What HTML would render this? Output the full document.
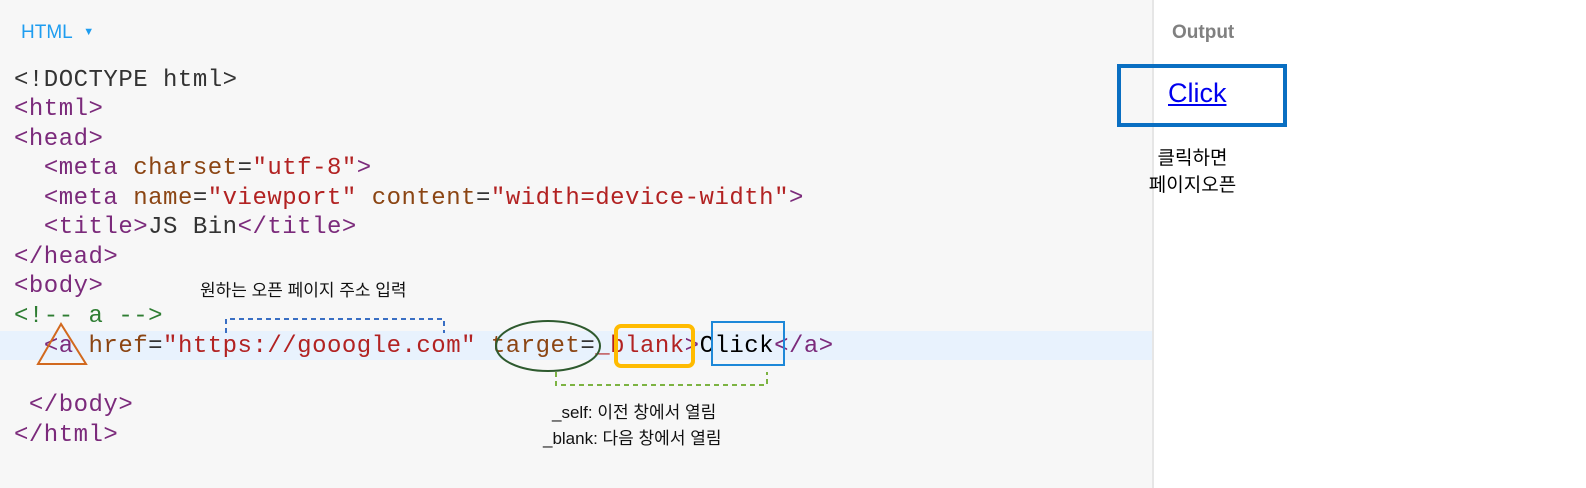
<!DOCTYPE html>
<html><head><meta charset="utf-8"><style>
body{margin:0;width:1586px;height:488px;position:relative;overflow:hidden;font-family:"Liberation Sans","Noto Sans CJK KR",sans-serif;background:#fff}
#ed{position:absolute;left:0;top:0;width:1152px;height:488px;background:#f7f7f7;border-right:2px solid #e6e6e6}
.hl{position:absolute;left:0;top:331px;width:1152px;height:29px;background:#e8f2fd}
.l{position:absolute;left:14px;font-family:"Liberation Mono",monospace;font-size:24px;letter-spacing:0.5px;white-space:pre;line-height:29px;color:#333}
.t{color:#7b2a7b}.a{color:#8b4513}.s{color:#b22222}.c{color:#2e7d32}
.k{position:absolute;font-size:17px;color:#111;white-space:nowrap}
</style></head><body>
<div id="ed"></div>
<div class="hl"></div>
<div style="position:absolute;left:21px;top:22px;font-size:19px;color:#1e9df0">HTML <span style="font-size:11px;vertical-align:3px;margin-left:6px">▼</span></div>
<div class="l" style="top:66px">&lt;!DOCTYPE html&gt;</div>
<div class="l t" style="top:95px">&lt;html&gt;</div>
<div class="l t" style="top:125px">&lt;head&gt;</div>
<div class="l" style="top:154px">  <span class="t">&lt;meta</span> <span class="a">charset</span>=<span class="s">"utf-8"</span><span class="t">&gt;</span></div>
<div class="l" style="top:184px">  <span class="t">&lt;meta</span> <span class="a">name</span>=<span class="s">"viewport"</span> <span class="a">content</span>=<span class="s">"width=device-width"</span><span class="t">&gt;</span></div>
<div class="l" style="top:213px">  <span class="t">&lt;title&gt;</span>JS Bin<span class="t">&lt;/title&gt;</span></div>
<div class="l t" style="top:243px">&lt;/head&gt;</div>
<div class="l t" style="top:272px">&lt;body&gt;</div>
<div class="l c" style="top:302px">&lt;!-- a --&gt;</div>
<div class="l" style="top:332px">  <span class="t">&lt;a</span> <span class="a">href</span>=<span class="s">"https://gooogle.com"</span> <span class="a">target</span>=<span class="s">_blank</span><span class="t">&gt;</span><span style="color:#000">Click</span><span class="t">&lt;/a&gt;</span></div>
<div class="l t" style="top:391px"> &lt;/body&gt;</div>
<div class="l t" style="top:421px">&lt;/html&gt;</div>
<svg style="position:absolute;left:0;top:0" width="1152" height="488">
<polygon points="61,324 38,364 86,364" fill="none" stroke="#d2691e" stroke-width="2"/>
<path d="M226,333 V319 H444 V333" fill="none" stroke="#3a6fc4" stroke-width="2" stroke-dasharray="5,4"/>
<ellipse cx="548" cy="346" rx="52" ry="25" fill="none" stroke="#2e5a2e" stroke-width="2"/>
<rect x="616" y="326" width="77" height="40" rx="5" fill="none" stroke="#ffbb00" stroke-width="4"/>
<rect x="712" y="322" width="72" height="43" fill="none" stroke="#1e88d8" stroke-width="2"/>
<path d="M556,372 V385 H767 V372" fill="none" stroke="#7cb342" stroke-width="2" stroke-dasharray="5,4"/>
</svg>
<div class="k" style="left:200px;top:276px">원하는 오픈 페이지 주소 입력</div>
<div class="k" style="left:552px;top:398px">_self: 이전 창에서 열림</div>
<div class="k" style="left:543px;top:424px">_blank: 다음 창에서 열림</div>
<div style="position:absolute;left:1172px;top:22px;font-size:19px;font-weight:bold;color:#808080">Output</div>
<div style="position:absolute;left:1117px;top:64px;width:162px;height:55px;border:4px solid #0a6fc2"></div>
<div style="position:absolute;left:1168px;top:78px;font-size:27px;color:#0000ee;text-decoration:underline">Click</div>
<div style="position:absolute;left:1130px;top:145px;font-size:19px;color:#000;text-align:center;width:125px;line-height:27px">클릭하면<br>페이지오픈</div>
</body></html>
